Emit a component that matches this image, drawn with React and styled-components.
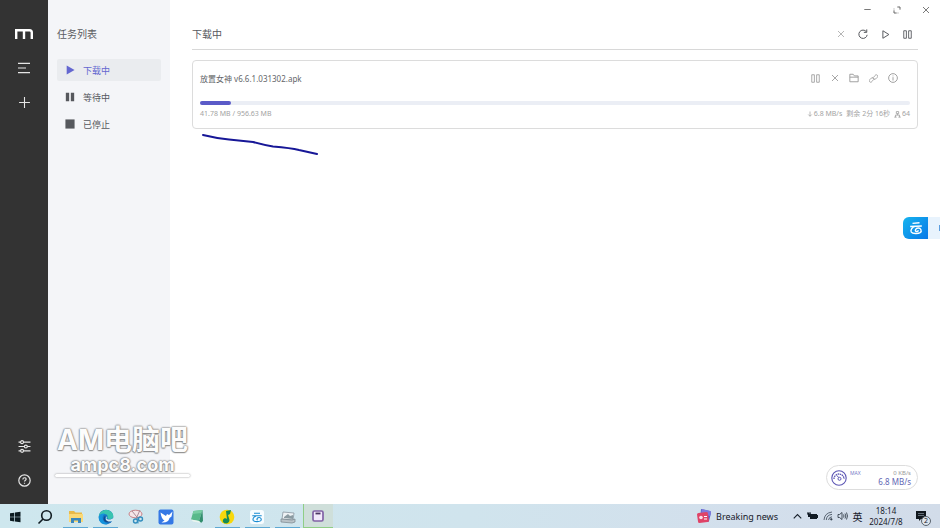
import React from 'react';
import styled, { createGlobalStyle, css } from 'styled-components';

const SANS = '"Noto Sans", "Noto Sans CJK SC", sans-serif';

const navItems = [
  { id: 'active', label: '下载中', icon: 'playSolid' },
  { id: 'waiting', label: '等待中', icon: 'pauseSolid' },
  { id: 'stopped', label: '已停止', icon: 'stopSolid' },
];

const task = {
  name: '放置女神 v6.6.1.031302.apk',
  done: 41.78,
  total: 956.63,
  speed: '6.8 MB/s',
  remaining: '剩余 2分 16秒',
  connections: 64,
};

const icons = {
  menu: <path d="M3 5h18M3 12h12M3 19h18" />,
  plus: <path d="M12 2v20M2 12h20" />,
  sliders: (
    <>
      <path d="M1 4h4M10 4h13M1 12h11M17 12h6M1 20h4M10 20h13" />
      <circle cx="7.500" cy="4" r="2.700" />
      <circle cx="14.500" cy="12" r="2.700" />
      <circle cx="7.500" cy="20" r="2.700" />
    </>
  ),
  help: (
    <>
      <circle cx="12" cy="12" r="10.500" />
      <path d="M9 10c0-4 6-4 6-.5 0 2-3 2-3 4.500M12 16v2" />
    </>
  ),
  playSolid: <path d="M4 1l19 11L4 23z" fill="currentColor" />,
  pauseSolid: <path d="M2 2h8v20H2zM14 2h8v20h-8z" fill="currentColor" />,
  stopSolid: <path d="M1 1h22v22H1z" fill="currentColor" />,
  minimize: <path d="M1 12h22" />,
  maximize: <path d="M13 3h8v8M11 21H3v-8M3 8v2M14 21h2" />,
  close: <path d="M3 3l18 18M21 3L3 21" />,
  refresh: <path d="M20 6.500A10 10 0 1 0 22 14M21 1v7h-7" />,
  play: <path d="M5 2l16 10L5 22z" />,
  pause: <path d="M2 2h7v20H2zM15 2h7v20h-7z" />,
  folder: <path d="M2 21V3h8l3 4h9v14zM2 10h20" />,
  link: (
    <path d="M13 8l3-4c4-5 10 1 6 5l-4 4c-3 3-9 0-7-5M11 16l-3 4c-4 5-10-1-6-5l4-4c3-3 9 0 7 5" />
  ),
  info: (
    <>
      <circle cx="12" cy="12" r="10.500" />
      <path d="M12 10v8M12 6v2" />
    </>
  ),
  down: <path d="M12 2v19M5 14l7 7 7-7" />,
  peers: <path d="M8 2h8v7H8zM12 9v5M5 14h14M5 14v7M19 14v7M1 21h8M15 21h8" />,
  chevronUp: <path d="M2 17L12 7l10 10" />,
};

const Icon = ({ name, size = 12, weight = 2 }) => (
  <svg
    width={size}
    height={size}
    viewBox="0 0 24 24"
    fill="none"
    stroke="currentColor"
    strokeWidth={weight}
    aria-hidden="true"
  >
    {icons[name]}
  </svg>
);

const Logo = () => (
  <svg width="18" height="10" viewBox="0 0 18 10" aria-hidden="true">
    <path
      d="M1.200 10V1.200H14.500Q16.800 1.200 16.800 3.500V10M9 1.200V10"
      fill="none"
      stroke="#fff"
      strokeWidth="2.400"
    />
  </svg>
);

/* Two strokes over a bowl that curls in on itself */
const CloudMark = () => (
  <svg width="14" height="14" viewBox="0 0 24 24" fill="none" stroke="#fff" strokeWidth="2.400" aria-hidden="true">
    <path d="M6 4l12-1M2 9.500l20-1M10 9.500C5 11 2 15 4 19c2 3 12 3 15 1 4-3 1-8-3-8-5 0-7 6-3 6 2 0 3-1 3-2" />
  </svg>
);

const Gauge = () => (
  <svg width="16" height="16" viewBox="0 0 16 16" fill="none" stroke="#5c56b4" aria-hidden="true">
    <circle cx="8" cy="8" r="7.200" strokeWidth="1.100" />
    <path d="M3 9A5 5 0 0 1 13 9" strokeWidth="1.300" strokeDasharray="1.500 .6" />
    <circle cx="8.500" cy="8.800" r="1.500" />
    <path d="M7.500 7.500L6 5.500" />
  </svg>
);

const apps = [
  {
    name: '开始',
    art: <path d="M3 4.300L7.300 3.700V7.700H3zM8 3.600L13.500 2.800V7.700H8zM3 8.300H7.300V12.400L3 11.800zM8 8.300H13.500V13.200L8 12.500z" fill="#0b1a20" />,
  },
  {
    name: '搜索',
    art: (
      <g fill="none" stroke="#111c22" strokeWidth="1.600">
        <circle cx="9.500" cy="6.500" r="4.800" />
        <path d="M6 10L1.500 14.500" />
      </g>
    ),
  },
  {
    name: '文件资源管理器',
    running: true,
    art: (
      <>
        <path d="M1 2h5l1.500 1.500H14V13H1z" fill="#e9b949" />
        <path d="M1 5h14v8H1z" fill="#fbd976" />
        <path d="M3 14V9h10v5h-3v-2.500H6V14z" fill="#3b87bd" />
      </>
    ),
  },
  {
    name: 'Microsoft Edge',
    running: true,
    art: (
      <>
        <circle cx="8" cy="8" r="7.300" fill="#1673c4" />
        <path d="M.8 8C1-1 14-1 15.300 6.500c.5 4-5 4.500-6 2.500 1-3-1-4-3-4C3 5 1 6.500.8 8z" fill="#38c4b0" />
        <path d="M.8 8C2 4.500 5 4 7 5c-4 2-3 8 3 9.900C4 17 .3 12 .8 8z" fill="#1593dc" />
        <path d="M7.500 7c-2 3 1 6 6 5-2 2-8 2-8-2 0-2 1-3 2-3z" fill="#124a8c" />
        <path d="M8.700 7.300c.5 2-1 2 .8 3 2 .8 4.500 0 6-1.500v3l-3 .7c-4 .5-6-2-3.800-5.200z" fill="#d3e8ef" />
      </>
    ),
  },
  {
    name: '截图工具',
    art: (
      <g fill="none">
        <ellipse cx="7.500" cy="5" rx="6.500" ry="3.800" fill="#f4e5e8" stroke="#c78289" />
        <path d="M4 2l6.500 8M12 1L8 10" stroke="#a98b98" />
        <circle cx="7.500" cy="12" r="2" stroke="#328dbe" strokeWidth="1.400" />
        <circle cx="12.500" cy="10" r="2" stroke="#328dbe" strokeWidth="1.400" />
        <path d="M10 8v6.500" stroke="#328dbe" />
      </g>
    ),
  },
  {
    name: '飞鸟',
    art: (
      <>
        <rect x=".5" y=".5" width="15" height="15" rx="2" fill="#3478e5" />
        <path d="M2.500 3.500L8 7l1-2 2 1 3.500-3.500-1 5-2 1.500c-1 4-4 5-8 4.500l3-2c-2-1-3.500-4-4-8z" fill="#fff" />
      </>
    ),
  },
  {
    name: '记事本',
    art: (
      <>
        <path d="M4.500 2l9-1-3.500 11-8-1.500z" fill="#59b98b" />
        <path d="M4.500 2l9-1-1 3-9 1z" fill="#79cda4" />
        <path d="M13.500 1l.5 11-2 2-2-2z" fill="#338e6d" />
        <path d="M2 10.500l8 1.500 2 2-8-1.500z" fill="#e9f5ef" />
      </>
    ),
  },
  {
    name: 'QQ音乐',
    running: true,
    art: (
      <>
        <circle cx="8" cy="8" r="7.300" fill="#f8d80c" />
        <path d="M7 2l5-1-1 4-2 1 1.500 5c0 5-8 4-6.500 0 .5-2 3-2 4-1z" fill="#168b55" />
      </>
    ),
  },
  {
    name: '云盘',
    running: true,
    art: (
      <>
        <rect x="1" y="1" width="14" height="14" rx="2.500" fill="#f7fcff" />
        <path d="M5 4.300h6M3.300 6.800h9.400M7 7C4.500 8 3.500 10 4.300 11.500c1 1.500 6 1.300 7.200.4 1.500-1.300.5-3.400-1.300-3.400-2.200 0-3 2.300-1.500 2.500" fill="none" stroke="#198bd2" strokeWidth="1.100" />
      </>
    ),
  },
  {
    name: '打印机',
    running: true,
    art: (
      <>
        <path d="M3 3l11 1-1 7-11-1z" fill="#eef2f5" stroke="#89969f" strokeWidth=".8" />
        <path d="M4 8l4-3 2 2 3-1v4l-9-1z" fill="#8b9ba2" />
        <path d="M1 10l11 1 3-1v3l-3 1-11-1z" fill="#bac3c8" stroke="#78858c" strokeWidth=".7" />
      </>
    ),
  },
  {
    name: 'Motrix',
    active: true,
    art: (
      <>
        <rect x="3" y="3" width="10" height="10" rx="1.500" fill="#f2e9fb" stroke="#8263a6" strokeWidth="1.700" />
        <path d="M5.500 5.500h5" stroke="#4b3562" strokeWidth="1.800" />
      </>
    ),
  },
];

const App = () => {
  const percent = (task.done / task.total) * 100;

  return (
    <>
      <GlobalStyle />
      <Desktop>
        <Window>
          <Rail aria-label="主菜单">
            <RailButton aria-label="Motrix"><Logo /></RailButton>
            <RailButton aria-label="任务列表"><Icon name="menu" size={16} weight={1.8} /></RailButton>
            <RailButton aria-label="新建任务"><Icon name="plus" size={13} /></RailButton>
            <RailSpacer />
            <RailButton aria-label="偏好设置"><Icon name="sliders" size={13} weight={2.2} /></RailButton>
            <RailButton aria-label="帮助"><Icon name="help" size={13} weight={2.2} /></RailButton>
          </Rail>

          <Sidebar>
            <SidebarTitle>任务列表</SidebarTitle>
            <NavList>
              {navItems.map((item, index) => (
                <li key={item.id}>
                  <NavLink href={`#${item.id}`} $active={index === 0}>
                    <Icon name={item.icon} size={10} weight={0} />
                    {item.label}
                  </NavLink>
                </li>
              ))}
            </NavList>
          </Sidebar>

          <Main>
            <WindowBar>
              <WindowButton aria-label="最小化"><Icon name="minimize" size={7} weight={3} /></WindowButton>
              <WindowButton aria-label="最大化"><Icon name="maximize" size={8} weight={3} /></WindowButton>
              <WindowButton aria-label="关闭"><Icon name="close" size={8} weight={2.6} /></WindowButton>
            </WindowBar>

            <Header>
              <HeaderTitle>下载中</HeaderTitle>
              <HeaderButton disabled aria-label="删除任务"><Icon name="close" size={8} weight={2.6} /></HeaderButton>
              <HeaderButton aria-label="刷新"><Icon name="refresh" size={10} weight={2.4} /></HeaderButton>
              <HeaderButton aria-label="全部继续"><Icon name="play" size={9} weight={2.6} /></HeaderButton>
              <HeaderButton aria-label="全部暂停"><Icon name="pause" size={9} weight={2.4} /></HeaderButton>
            </Header>

            <TaskCard>
              <TaskTop>
                <TaskName>{task.name}</TaskName>
                <TaskActions>
                  <TaskButton aria-label="暂停"><Icon name="pause" size={9} weight={2.2} /></TaskButton>
                  <TaskButton aria-label="删除"><Icon name="close" size={8} weight={2.6} /></TaskButton>
                  <TaskButton aria-label="打开文件夹"><Icon name="folder" size={10} weight={2.2} /></TaskButton>
                  <TaskButton aria-label="复制链接"><Icon name="link" size={9} weight={2.2} /></TaskButton>
                  <TaskButton aria-label="详情"><Icon name="info" size={10} weight={2.2} /></TaskButton>
                </TaskActions>
              </TaskTop>
              <Track role="progressbar" aria-valuenow={Math.round(percent)} aria-label={task.name}>
                <Bar style={{ width: `${percent}%` }} />
              </Track>
              <TaskMeta>
                <span>{task.done} MB / {task.total} MB</span>
                <Stats>
                  <Stat><Icon name="down" size={6} weight={3} />{task.speed}</Stat>
                  <Stat>{task.remaining}</Stat>
                  <Stat><Icon name="peers" size={7} weight={3} />{task.connections}</Stat>
                </Stats>
              </TaskMeta>
              <PenStroke viewBox="0 0 118 22" aria-hidden="true">
                <path d="M2 2Q14 5 28 6.500T52 9Q63 12 72 13.500Q90 15 98 17L116 21" />
              </PenStroke>
            </TaskCard>
          </Main>

          <Watermark>
            <WatermarkName>AM电脑吧</WatermarkName>
            <WatermarkSite>ampc8.com</WatermarkSite>
            <WatermarkLine />
          </Watermark>

          <CloudDock>
            <CloudButton aria-label="云盘"><CloudMark /></CloudButton>
            <DockEdge />
          </CloudDock>

          <Speedometer>
            <Gauge />
            <Mode>MAX</Mode>
            <Rates>
              <Upload>0 KB/s</Upload>
              <Download>6.8 MB/s</Download>
            </Rates>
          </Speedometer>
        </Window>

        <Taskbar>
          <AppStrip>
            {apps.map((app) => (
              <AppButton key={app.name} aria-label={app.name} $running={app.running} $active={app.active}>
                <svg width="16" height="16" viewBox="0 0 16 16" aria-hidden="true">{app.art}</svg>
              </AppButton>
            ))}
          </AppStrip>
          <News>
            <svg width="16" height="16" viewBox="0 0 16 16" aria-hidden="true">
              <path d="M5 1l9 2q1 0 1 2l-2 8q0 1-2 1L4 12z" fill="#5362ca" />
              <path d="M6 1l8 2q1 0 1 2l-1 3-9-2z" fill="#7f79dc" />
              <path d="M2.500 5l8-1q1.500 0 1.500 1.500l1 7q0 1.500-1.500 1.500l-8 1Q2 15 2 13.500l-1-7Q1 5 2.500 5z" fill="#df4367" />
              <circle cx="5" cy="9.500" r="1.800" fill="#fbdde8" />
              <path d="M8 8.500h3M8 11h3" stroke="#fff" />
            </svg>
            Breaking news
          </News>
          <Tray>
            <TrayButton aria-label="显示隐藏的图标"><Icon name="chevronUp" size={9} weight={3} /></TrayButton>
            <TrayButton aria-label="电池">
              <svg width="11" height="10" viewBox="0 0 11 10" aria-hidden="true">
                <path d="M2 3h8v1h1v3h-1v1H3V6H1V2h1z" fill="#111b24" />
                <path d="M0 3h4M1 1v2M3 1v2" stroke="#111b24" />
              </svg>
            </TrayButton>
            <TrayButton aria-label="网络">
              <svg width="10" height="10" viewBox="0 0 10 10" fill="none" stroke="#4a5663" strokeWidth=".9" aria-hidden="true">
                <path d="M1 9Q1.500 2 9 1M3.300 9Q3.500 4 9 3.400M5.500 9Q6 6 9 5.800" />
                <circle cx="8.300" cy="8.300" r=".8" fill="#111b24" />
              </svg>
            </TrayButton>
            <TrayButton aria-label="音量">
              <svg width="11" height="10" viewBox="0 0 11 10" fill="none" stroke="#26313c" strokeWidth=".8" aria-hidden="true">
                <path d="M1 3.500h1.500L5 1.500v7L2.500 6.500H1zM6.500 3.500q1 1.500 0 3M8 2.500q1.700 2.500 0 5M9.500 1.500q2 3.500 0 7" />
              </svg>
            </TrayButton>
            <TrayButton>英</TrayButton>
          </Tray>
          <Clock>
            <time>18:14</time>
            <time>2024/7/8</time>
          </Clock>
          <Notices aria-label="通知">
            <svg width="12" height="12" viewBox="0 0 12 12" aria-hidden="true">
              <path d="M1 1h10v8H6l-2 2V9H1z" fill="#10171d" />
              <path d="M3 3.500h6M3 5.500h6" stroke="#8894a0" strokeWidth=".7" />
            </svg>
            <Badge>2</Badge>
          </Notices>
        </Taskbar>
      </Desktop>
    </>
  );
};

// Styled components
const GlobalStyle = createGlobalStyle`
  * {
    box-sizing: border-box;
  }

  body {
    margin: 0;
    font-family: ${SANS};
    background: #fff;
  }

  button {
    display: flex;
    align-items: center;
    justify-content: center;
    padding: 0;
    border: 0;
    background: none;
    color: inherit;
    font: inherit;
  }

  svg {
    flex: none;
  }
`;

const Desktop = styled.div`
  display: grid;
  grid-template-rows: 1fr 24px;
  min-height: 100vh;
`;

const Window = styled.div`
  position: relative;
  display: grid;
  grid-template-columns: 48px 122px 1fr;
  background: #fff;
`;

const Rail = styled.nav`
  display: flex;
  flex-direction: column;
  padding: 17px 0 7px;
  background: #333;
  color: #e6e6e6;
`;

const RailButton = styled.button`
  height: 34px;
`;

const RailSpacer = styled.div`
  flex: 1;
`;

const Sidebar = styled.aside`
  padding: 24px 9px;
  background: #f4f5f8;
  color: #5a5c61;
`;

const SidebarTitle = styled.h2`
  margin: 0 0 15px;
  font-size: 10px;
  line-height: 20px;
  font-weight: 400;
`;

const NavList = styled.ul`
  display: grid;
  gap: 5px;
  margin: 0;
  padding: 0;
  list-style: none;
`;

const NavLink = styled.a`
  display: flex;
  align-items: center;
  gap: 8px;
  height: 22px;
  padding: 0 8px;
  border-radius: 2px;
  font-size: 9px;
  color: #56585d;
  text-decoration: none;

  ${({ $active }) => $active && css`
    background: #eaecef;
    color: #6467d0;
  `}
`;

const Main = styled.main`
  min-width: 0;
`;

const WindowBar = styled.div`
  display: flex;
  justify-content: flex-end;
  height: 19px;
  color: #666;
`;

const WindowButton = styled.button`
  width: 29px;
`;

const Header = styled.header`
  display: flex;
  align-items: center;
  height: 31px;
  margin: 0 22px 10px;
  border-bottom: 1px solid #d8d8d8;
  color: #56585d;
`;

const HeaderTitle = styled.h1`
  flex: 1;
  margin: 0;
  font-size: 10px;
  line-height: 20px;
  font-weight: 400;
`;

const HeaderButton = styled.button`
  width: 22px;
  height: 22px;

  &:disabled {
    color: #aaa;
  }
`;

const TaskCard = styled.article`
  position: relative;
  margin: 0 22px;
  padding: 8px 7px 9px;
  border: 1px solid #dcdcdc;
  border-radius: 4px;
`;

const TaskTop = styled.div`
  display: flex;
  align-items: center;
  justify-content: space-between;
  height: 18px;
  margin-bottom: 14px;
`;

const TaskName = styled.div`
  font-size: 8px;
  color: #64666a;
`;

const TaskActions = styled.div`
  display: flex;
  justify-content: space-between;
  width: 94px;
  margin-right: 9px;
  color: #999;
`;

const TaskButton = styled.button`
  width: 16px;
  height: 16px;
`;

const Track = styled.div`
  height: 4px;
  border-radius: 4px;
  background: #ebeef5;
`;

const Bar = styled.div`
  height: 4px;
  border-radius: 4px;
  background: #5b5bc8;
`;

const TaskMeta = styled.div`
  display: flex;
  justify-content: space-between;
  margin-top: 4px;
  font-size: 7px;
  line-height: 10px;
  color: #a3a3a3;
`;

const Stats = styled.div`
  display: flex;
  gap: 4px;
`;

const Stat = styled.span`
  display: flex;
  align-items: center;
  gap: 1px;
`;

/* Hand-drawn mark hanging under the card */
const PenStroke = styled.svg`
  position: absolute;
  top: 72px;
  left: 8px;
  width: 118px;
  height: 22px;
  fill: none;
  stroke: #171797;
  stroke-width: 2;
  stroke-linecap: round;
`;

const Watermark = styled.div`
  position: absolute;
  left: 55px;
  bottom: 27px;
  width: 135px;
  text-align: center;
  font-family: Inter, "Noto Sans CJK SC", sans-serif;
  font-weight: 700;
  color: #fcfcfc;
  text-shadow: 0 0 1px #888, 0 0 2px #888, 0 0 2px #888, 0 1px 1px #999;
  white-space: nowrap;
`;

const WatermarkName = styled.div`
  display: flex;
  justify-content: center;
  font-size: 28px;
  line-height: 32px;
`;

const WatermarkSite = styled.div`
  font-size: 18px;
  line-height: 18px;
`;

const WatermarkLine = styled.div`
  height: 3px;
  border-radius: 2px;
  background: #fff;
  box-shadow: 0 0 2px #888;
`;

const CloudDock = styled.div`
  position: absolute;
  top: 217px;
  right: 0;
  display: flex;
  align-items: center;
  justify-content: space-between;
  width: 37px;
  border-radius: 6px 0 0 6px;
  background: #e8f3fd;
`;

const CloudButton = styled.button`
  width: 25px;
  height: 22px;
  border-radius: 6px 0 0 6px;
  background: linear-gradient(135deg, #16b4ee, #0878e8);
`;

const DockEdge = styled.span`
  width: 1px;
  height: 6px;
  background: #5b9ee0;
`;

const Speedometer = styled.div`
  position: absolute;
  right: 22px;
  bottom: 14px;
  display: flex;
  align-items: center;
  gap: 3px;
  width: 92px;
  height: 25px;
  padding: 0 6px 0 4px;
  border: 1px solid #ddd;
  border-radius: 13px;
  background: #fff;
`;

const Mode = styled.span`
  align-self: flex-start;
  padding-top: 4px;
  font-size: 5px;
  line-height: 6px;
  color: #777bc8;
`;

const Rates = styled.div`
  flex: 1;
  text-align: right;
  white-space: nowrap;
`;

const Upload = styled.div`
  font-size: 6px;
  line-height: 8px;
  color: #999;
`;

const Download = styled.div`
  font-size: 8px;
  line-height: 10px;
  color: #6266b4;
`;

const Taskbar = styled.footer`
  display: flex;
  align-items: center;
  background: linear-gradient(90deg, #cee7ee, #d0e4ed 50%, #d3dfec 80%, #d2dce9);
  color: #17202a;
`;

const AppStrip = styled.div`
  display: grid;
  grid-template-columns: repeat(11, 1fr);
  align-self: stretch;
  width: 333px;
`;

const AppButton = styled.button`
  && {
    padding-top: 1px;
    ${({ $running }) => $running && css`
      background: linear-gradient(#5ea9d3, #5ea9d3) bottom / 25px 1px no-repeat;
    `}
    ${({ $active }) => $active && css`
      border-left: 1px solid #8fce86;
      border-bottom: 1px solid #8fce86;
      background: #cfdfda;
    `}
  }
`;

const News = styled.div`
  display: flex;
  align-items: center;
  gap: 4px;
  margin-left: auto;
  font-size: 9px;
  white-space: nowrap;
`;

const Tray = styled.div`
  display: flex;
  margin-left: 12px;
  font-size: 10px;
`;

const TrayButton = styled.button`
  width: 15px;
  height: 24px;
`;

const Clock = styled.div`
  display: flex;
  flex-direction: column;
  align-items: center;
  width: 42px;
  font-size: 8px;
  line-height: 11px;
`;

const Notices = styled.button`
  position: relative;
  width: 28px;
  height: 24px;
  margin-right: 5px;
`;

const Badge = styled.span`
  position: absolute;
  right: 4px;
  bottom: 2px;
  width: 10px;
  height: 10px;
  border: 1px solid #59636d;
  border-radius: 50%;
  background: #dce4ec;
  font-size: 7px;
  line-height: 8px;
`;

export default App;
